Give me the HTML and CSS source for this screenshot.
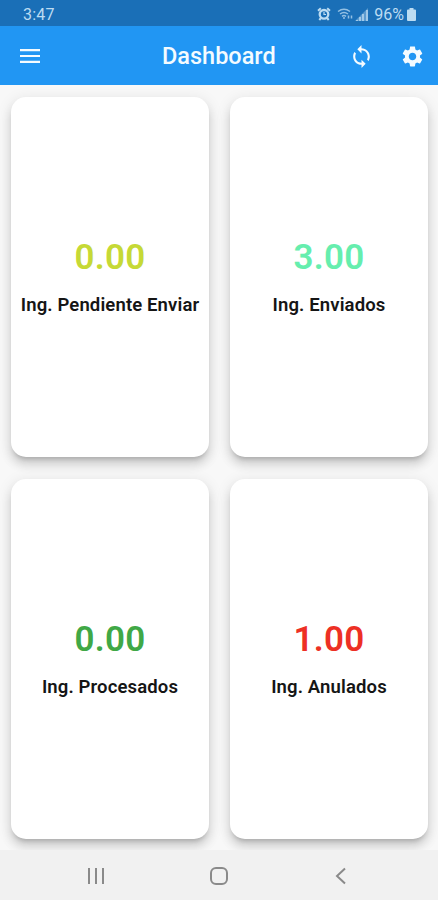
FILE: index.html
```html
<!DOCTYPE html>
<html lang="es">
<head>
<meta charset="utf-8">
<title>Dashboard</title>
<link rel="stylesheet" href="styles.css">
</head>
<body>
<header class="status">
  <span class="time">3:47</span>
  <div class="status-icons">
    <svg class="alarm" width="14" height="14" viewBox="0 0 14 14" fill="none" stroke="currentColor"><circle cx="7" cy="7.300" r="4.300" stroke-width="2.300"/><path d="M1 3.700 3.800 1.300M13 3.700 10.200 1.300M3.800 11.200 2.300 13M10.200 11.200 11.700 13" stroke-width="2"/><path d="M7 5v2.500h2" stroke-width="1.200"/></svg>
    <svg class="wifi" width="17" height="14" viewBox="0 0 17 14" fill="none" stroke="currentColor" stroke-width="1.500"><path d="M1 4.500q6-4.500 12 0M3 7q4-3 8 0M5 9.300q2-1.500 4 0"/><path d="M7 10v2M11.500 8.500v3M14.500 8.500v3" stroke-width="1.500"/></svg>
    <svg class="signal" width="13" height="13" viewBox="0 0 13 13" fill="currentColor"><path opacity=".4" d="M0 13 13 0v13z"/><path d="M1 12h2v1H1zM4 9h2v4H4zM7 6h2v7H7zM11 2h2v11h-2z" opacity=".7"/></svg>
    <span class="percent">96%</span>
    <svg class="battery" width="9" height="13" viewBox="0 0 9 13" fill="currentColor"><path d="M2.500 0h4v1.500H8q1 0 1 1V12q0 1-1 1H1q-1 0-1-1V2.500q0-1 1-1h1.500z"/></svg>
  </div>
</header>
<nav class="appbar">
  <svg class="menu" width="20" height="14" viewBox="0 0 20 14" fill="currentColor"><path d="M0 0h20v2.200H0zM0 5.900h20v2.200H0zM0 11.800h20V14H0z"/></svg>
  <h1>Dashboard</h1>
  <svg class="sync" width="25" height="25" viewBox="0 0 24 24" fill="currentColor"><path d="M12 4V1L8 5l4 4V6c3.310 0 6 2.690 6 6 0 1.010-.25 1.970-.7 2.800l1.460 1.460C19.540 15.030 20 13.570 20 12c0-4.420-3.580-8-8-8zm0 14c-3.310 0-6-2.690-6-6 0-1.010.25-1.970.7-2.800L5.240 7.740C4.460 8.970 4 10.430 4 12c0 4.420 3.580 8 8 8v3l4-4-4-4v3z"/></svg>
  <svg class="gear" width="25" height="25" viewBox="0 0 24 24" fill="currentColor"><path d="M19.140 12.940c.04-.3.060-.61.060-.94 0-.32-.02-.64-.07-.94l2.030-1.580c.18-.14.23-.41.12-.61l-1.920-3.320c-.12-.22-.37-.29-.59-.22l-2.390.96c-.5-.38-1.030-.7-1.620-.94l-.36-2.540c-.04-.24-.24-.41-.48-.41h-3.840c-.24 0-.43.17-.47.41l-.36 2.540c-.59.24-1.130.57-1.620.94l-2.390-.96c-.22-.08-.47 0-.59.22L2.740 8.870c-.12.21-.08.47.12.61l2.030 1.580c-.05.3-.09.63-.09.94s.02.64.07.94l-2.030 1.580c-.18.14-.23.41-.12.61l1.920 3.320c.12.22.37.29.59.22l2.390-.96c.5.38 1.030.7 1.620.94l.36 2.540c.05.24.24.41.48.41h3.840c.24 0 .44-.17.47-.41l.36-2.540c.59-.24 1.130-.56 1.620-.94l2.390.96c.22.08.47 0 .59-.22l1.920-3.320c.12-.22.07-.47-.12-.61l-2.010-1.580zM12 15.600c-1.980 0-3.600-1.620-3.600-3.600s1.620-3.600 3.600-3.600 3.600 1.620 3.600 3.600-1.620 3.600-3.600 3.600z"/></svg>
</nav>
<main class="grid">
  <section class="card"><strong class="value lime">0.00</strong><span class="label">Ing. Pendiente Enviar</span></section>
  <section class="card"><strong class="value mint">3.00</strong><span class="label">Ing. Enviados</span></section>
  <section class="card"><strong class="value green">0.00</strong><span class="label">Ing. Procesados</span></section>
  <section class="card"><strong class="value red">1.00</strong><span class="label">Ing. Anulados</span></section>
</main>
<footer class="navbar">
  <svg width="18" height="18" viewBox="0 0 18 18"><path d="M2 1v16M9 1v16M16 1v16"/></svg>
  <svg width="18" height="18" viewBox="0 0 18 18"><rect x="1" y="1" width="16" height="16" rx="5"/></svg>
  <svg width="18" height="18" viewBox="0 0 18 18"><path d="M13 1.500 5 9l8 7.500"/></svg>
</footer>
</body>
</html>
```
FILE: styles.css
```css
* { box-sizing: border-box; }
body {
  margin: 0;
  width: 438px;
  height: 900px;
  display: flex;
  flex-direction: column;
  overflow: hidden;
  background: #f8f8f8;
  font-family: Roboto, "Liberation Sans", sans-serif;
}
svg { display: block; flex: none; }
.status {
  height: 26px;
  flex: none;
  display: flex;
  align-items: center;
  justify-content: space-between;
  padding: 2px 22px 0 23px;
  background: #1a6fb7;
  color: #bcdcf2;
  font-size: 16px;
}
.time { letter-spacing: 0.2px; }
.status-icons { display: flex; align-items: center; }
.wifi { margin-left: 6px; opacity: 0.75; }
.signal { margin-left: 1px; }
.percent { margin: 0 3px 0 6px; }
.appbar {
  height: 59px;
  flex: none;
  display: flex;
  align-items: center;
  padding: 1px 13px 0 20px;
  background: #2196f3;
  color: #f4fbff;
}
.appbar h1 {
  margin: 0 0 0 122px;
  width: 114px;
  font-size: 23.5px;
  font-weight: 500;
  line-height: 28px;
  white-space: nowrap;
}
.sync { margin-left: 73px; }
.gear { margin-left: auto; }
.grid {
  height: 765px;
  flex: none;
  display: grid;
  grid-template-columns: 198px 198px;
  grid-template-rows: 360px 360px;
  gap: 22px 21px;
  padding: 12px 0 0 11px;
  overflow: hidden;
}
.card {
  display: flex;
  flex-direction: column;
  align-items: center;
  padding-top: 140px;
  background: #fff;
  border-radius: 15px;
  box-shadow: 0 5px 5px -3px rgba(0, 0, 0, 0.2), 0 8px 10px 1px rgba(0, 0, 0, 0.1), 0 3px 14px 2px rgba(0, 0, 0, 0.08);
}
.value {
  font-size: 35px;
  line-height: 42px;
  font-weight: 600;
  letter-spacing: 0.3px;
}
.label {
  margin-top: 15px;
  font-size: 18.5px;
  line-height: 22px;
  font-weight: 600;
  letter-spacing: 0.13px;
  color: #151515;
  white-space: nowrap;
}
.lime { color: #c6d936; }
.mint { color: #66eeae; }
.green { color: #40a846; }
.red { color: #ed3024; }
.navbar {
  height: 50px;
  flex: none;
  display: flex;
  justify-content: space-between;
  align-items: center;
  padding: 2px 88px 0 87px;
  background: #f1f1f1;
}
.navbar svg { fill: none; stroke: #8a8a8a; stroke-width: 2; }
```
